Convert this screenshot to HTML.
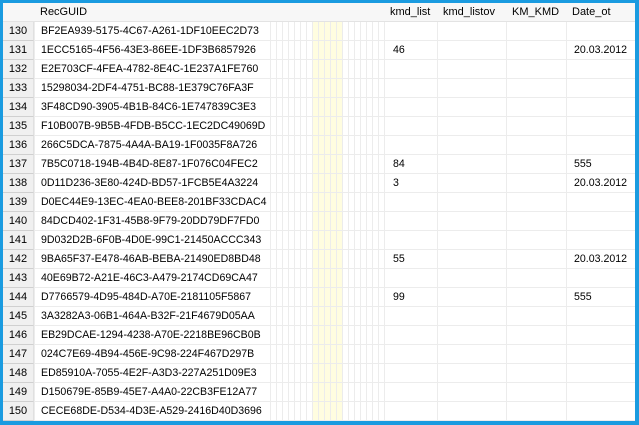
<!DOCTYPE html>
<html><head><meta charset="utf-8"><style>
*{margin:0;padding:0;box-sizing:border-box}
body{width:639px;height:425px;overflow:hidden;background:#1a9be0;font-family:"Liberation Sans",Arial,sans-serif;font-size:10.6px;color:#000;position:relative}
#g{position:absolute;left:3px;top:3px;width:632px;height:418px;background:#fff;overflow:hidden}
.vl{position:absolute;top:0;bottom:0;width:1px;background:#ececec}
.y{position:absolute;top:19px;bottom:0;left:310px;width:30px;background:#fffde0}
.hdr{position:absolute;left:0;top:0;width:632px;height:19px;background:#f7f7f7;border-bottom:1px solid #e3e3e3}
.r{position:absolute;left:0;width:632px;height:19px;border-bottom:1px solid #ececec}
.n{position:absolute;left:0;top:0;width:31px;height:19px;background:#f0f0f0;border-bottom:1px solid #d0d0d0;border-right:1px solid #e0e0e0;text-align:center;line-height:18px;font-size:11px}
.t{position:absolute;top:0;line-height:18px;white-space:nowrap}
</style></head><body>
<div id="g">
<div class="y"></div>
<div class="vl" style="left:31px"></div>
<div class="vl" style="left:267px"></div><div class="vl" style="left:273px"></div><div class="vl" style="left:279px"></div><div class="vl" style="left:285px"></div><div class="vl" style="left:291px"></div><div class="vl" style="left:297px"></div><div class="vl" style="left:303px"></div><div class="vl" style="left:309px"></div><div class="vl" style="left:315px"></div><div class="vl" style="left:321px"></div><div class="vl" style="left:327px"></div><div class="vl" style="left:333px"></div><div class="vl" style="left:339px"></div><div class="vl" style="left:345px"></div><div class="vl" style="left:351px"></div><div class="vl" style="left:357px"></div><div class="vl" style="left:363px"></div><div class="vl" style="left:369px"></div><div class="vl" style="left:375px"></div><div class="vl" style="left:381px"></div>
<div class="vl" style="left:434px"></div><div class="vl" style="left:503px"></div><div class="vl" style="left:563px"></div>
<div class="hdr">
<span class="t" style="left:37px;font-size:11px">RecGUID</span>
<span class="t" style="left:387px;font-size:11px">kmd_list</span>
<span class="t" style="left:440px;font-size:11px">kmd_listov</span>
<span class="t" style="left:509px;font-size:11px">KM_KMD</span>
<span class="t" style="left:569px;font-size:11px">Date_ot</span>
</div>
<div class="r" style="top:19px"><div class="n">130</div><span class="t" style="left:38px">BF2EA939-5175-4C67-A261-1DF10EEC2D73</span></div>
<div class="r" style="top:38px"><div class="n">131</div><span class="t" style="left:38px">1ECC5165-4F56-43E3-86EE-1DF3B6857926</span><span class="t" style="left:390px">46</span><span class="t" style="left:571px">20.03.2012</span></div>
<div class="r" style="top:57px"><div class="n">132</div><span class="t" style="left:38px">E2E703CF-4FEA-4782-8E4C-1E237A1FE760</span></div>
<div class="r" style="top:76px"><div class="n">133</div><span class="t" style="left:38px">15298034-2DF4-4751-BC88-1E379C76FA3F</span></div>
<div class="r" style="top:95px"><div class="n">134</div><span class="t" style="left:38px">3F48CD90-3905-4B1B-84C6-1E747839C3E3</span></div>
<div class="r" style="top:114px"><div class="n">135</div><span class="t" style="left:38px">F10B007B-9B5B-4FDB-B5CC-1EC2DC49069D</span></div>
<div class="r" style="top:133px"><div class="n">136</div><span class="t" style="left:38px">266C5DCA-7875-4A4A-BA19-1F0035F8A726</span></div>
<div class="r" style="top:152px"><div class="n">137</div><span class="t" style="left:38px">7B5C0718-194B-4B4D-8E87-1F076C04FEC2</span><span class="t" style="left:390px">84</span><span class="t" style="left:571px">555</span></div>
<div class="r" style="top:171px"><div class="n">138</div><span class="t" style="left:38px">0D11D236-3E80-424D-BD57-1FCB5E4A3224</span><span class="t" style="left:390px">3</span><span class="t" style="left:571px">20.03.2012</span></div>
<div class="r" style="top:190px"><div class="n">139</div><span class="t" style="left:38px">D0EC44E9-13EC-4EA0-BEE8-201BF33CDAC4</span></div>
<div class="r" style="top:209px"><div class="n">140</div><span class="t" style="left:38px">84DCD402-1F31-45B8-9F79-20DD79DF7FD0</span></div>
<div class="r" style="top:228px"><div class="n">141</div><span class="t" style="left:38px">9D032D2B-6F0B-4D0E-99C1-21450ACCC343</span></div>
<div class="r" style="top:247px"><div class="n">142</div><span class="t" style="left:38px">9BA65F37-E478-46AB-BEBA-21490ED8BD48</span><span class="t" style="left:390px">55</span><span class="t" style="left:571px">20.03.2012</span></div>
<div class="r" style="top:266px"><div class="n">143</div><span class="t" style="left:38px">40E69B72-A21E-46C3-A479-2174CD69CA47</span></div>
<div class="r" style="top:285px"><div class="n">144</div><span class="t" style="left:38px">D7766579-4D95-484D-A70E-2181105F5867</span><span class="t" style="left:390px">99</span><span class="t" style="left:571px">555</span></div>
<div class="r" style="top:304px"><div class="n">145</div><span class="t" style="left:38px">3A3282A3-06B1-464A-B32F-21F4679D05AA</span></div>
<div class="r" style="top:323px"><div class="n">146</div><span class="t" style="left:38px">EB29DCAE-1294-4238-A70E-2218BE96CB0B</span></div>
<div class="r" style="top:342px"><div class="n">147</div><span class="t" style="left:38px">024C7E69-4B94-456E-9C98-224F467D297B</span></div>
<div class="r" style="top:361px"><div class="n">148</div><span class="t" style="left:38px">ED85910A-7055-4E2F-A3D3-227A251D09E3</span></div>
<div class="r" style="top:380px"><div class="n">149</div><span class="t" style="left:38px">D150679E-85B9-45E7-A4A0-22CB3FE12A77</span></div>
<div class="r" style="top:399px"><div class="n">150</div><span class="t" style="left:38px">CECE68DE-D534-4D3E-A529-2416D40D3696</span></div>
</div>
</body></html>
